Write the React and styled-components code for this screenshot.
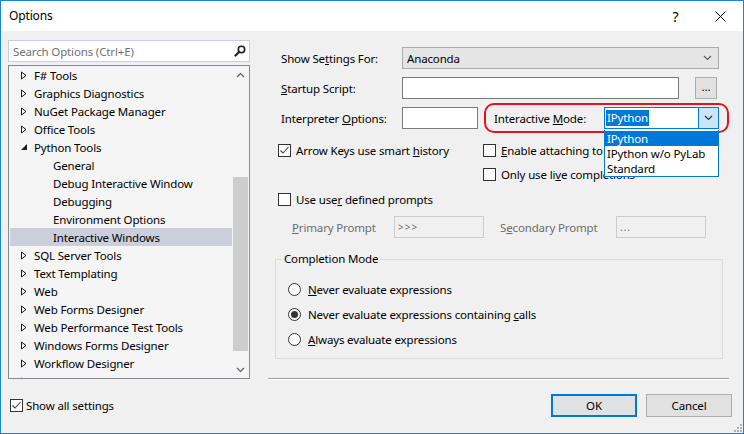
import React from 'react';
import styled, { createGlobalStyle } from 'styled-components';

const FONT = `"Segoe UI", "Noto Sans", "Open Sans", sans-serif`;

const GlobalStyle = createGlobalStyle`
  html, body {
    margin: 0;
    padding: 0;
    background: #fff;
  }
  body {
    font-family: ${FONT};
    font-size: 11.5px;
    letter-spacing: -0.15px;
    color: #000;
  }
  * {
    box-sizing: border-box;
  }
`;

const Window = styled.div`
  background: #f0f0f0;
  border: 1px solid #1883d7;
  display: flex;
  flex-direction: column;
  height: 434px;
  overflow: hidden;
  position: relative;
  width: 744px;
`;

const TitleBar = styled.div`
  align-items: center;
  background: #fff;
  display: flex;
  flex-shrink: 0;
  font-size: 12px;
  height: 30px;
  padding-left: 8px;
`;

const TitleText = styled.div`
  flex: 1;
  line-height: 30px;
`;

const CaptionButton = styled.div`
  align-items: center;
  display: flex;
  font-size: 14px;
  height: 30px;
  justify-content: center;
  width: 45px;
`;

const Body = styled.div`
  display: flex;
  flex: 1;
`;

const LeftPane = styled.div`
  display: flex;
  flex-direction: column;
  flex-shrink: 0;
  padding: 9px 0 0 7px;
  width: 249px;
`;

const SearchBox = styled.div`
  align-items: center;
  background: #fff;
  border: 1px solid #cccedb;
  display: flex;
  height: 22px;
  padding: 0 3px 0 4px;
  width: 242px;
`;

const SearchText = styled.span`
  color: #717171;
  flex: 1;
`;

const Tree = styled.div`
  background: #f5f5f5;
  border: 1px solid #828790;
  display: flex;
  height: 314px;
  margin-top: 3px;
  width: 242px;
`;

const TreeList = styled.div`
  flex: 1;
  overflow: hidden;
  padding: 0 0 0 1px;
`;

const TreeRow = styled.div`
  align-items: center;
  background: ${(p) => (p.$selected ? '#cccedb' : 'transparent')};
  display: flex;
  height: 18px;
  padding-left: ${(p) => (p.$level ? 29 : 10)}px;
  white-space: nowrap;
`;

const Toggle = styled.span`
  align-items: center;
  display: flex;
  flex-shrink: 0;
  height: 18px;
  width: 14px;
`;

const ScrollBar = styled.div`
  display: flex;
  flex-direction: column;
  flex-shrink: 0;
  width: 17px;
`;

const ScrollArrow = styled.div`
  align-items: center;
  display: flex;
  height: 17px;
  justify-content: center;
`;

const ScrollTrack = styled.div`
  flex: 1;
  padding-top: ${(p) => p.$offset}px;
`;

const ScrollThumb = styled.div`
  background: #cdcdcd;
  height: ${(p) => p.$size}px;
  margin-left: 1px;
  width: 15px;
`;

const ShowAll = styled.label`
  align-items: center;
  display: flex;
  gap: 3px;
  height: 18px;
  margin-top: 17px;
  padding-left: 2px;
`;

const RightPane = styled.div`
  display: flex;
  flex: 1;
  flex-direction: column;
  padding: 16px 15px 0 18px;
`;

const Form = styled.div`
  display: flex;
  flex-direction: column;
  padding-left: 13px;
`;

const FieldRow = styled.div`
  align-items: center;
  display: flex;
  height: 22px;
  margin-top: ${(p) => p.$gap || 0}px;
`;

const FieldLabel = styled.span`
  color: ${(p) => (p.$disabled ? '#6d6d6d' : '#000')};
  flex-shrink: 0;
  margin-left: ${(p) => p.$indent || 0}px;
  width: ${(p) => p.$width}px;
`;

const ComboBox = styled.div`
  align-items: center;
  background: #e5e5e5;
  border: 1px solid #acacac;
  display: flex;
  height: 22px;
  padding: 0 6px 0 4px;
  width: ${(p) => p.$width}px;
`;

const ComboText = styled.span`
  flex: 1;
`;

const TextBox = styled.div`
  align-items: center;
  background: ${(p) => (p.$disabled ? '#f0f0f0' : '#fff')};
  border: 1px solid ${(p) => (p.$disabled ? '#cccccc' : '#7a7a7a')};
  color: #6d6d6d;
  display: flex;
  font-size: 10px;
  height: 22px;
  letter-spacing: 1px;
  padding-left: 3px;
  width: ${(p) => p.$width}px;
`;

const SmallButton = styled.div`
  align-items: center;
  background: #e1e1e1;
  border: 1px solid #adadad;
  display: flex;
  height: 22px;
  justify-content: center;
  margin-left: 16px;
  padding-bottom: 4px;
  width: 22px;
`;

const ModeGroup = styled.div`
  align-items: center;
  border: 2px solid #e81123;
  border-radius: 10px;
  display: flex;
  height: 30px;
  margin: -4px 0 -4px 6px;
  padding: 0 8px;
`;

const EditCombo = styled.div`
  align-items: center;
  background: #fff;
  border: 1px solid #0078d7;
  display: flex;
  height: 22px;
  position: relative;
  width: 115px;
`;

const SelectedText = styled.span`
  background: #0078d7;
  color: #fff;
  line-height: 16px;
  margin-left: 1px;
  padding: 0 1px;
`;

const DropButton = styled.div`
  align-items: center;
  align-self: stretch;
  background: #cce4f7;
  border-left: 1px solid #0078d7;
  display: flex;
  justify-content: center;
  margin-left: auto;
  width: 20px;
`;

const DropList = styled.div`
  background: #fff;
  border: 1px solid #0078d7;
  border-top: none;
  left: -1px;
  padding-top: 1px;
  position: absolute;
  top: calc(100% + 2px);
  width: 115px;
  z-index: 5;
`;

const DropItem = styled.div`
  background: ${(p) => (p.$active ? '#0078d7' : 'transparent')};
  color: ${(p) => (p.$active ? '#fff' : '#000')};
  height: 15px;
  line-height: 15px;
  padding-left: 2px;
  white-space: nowrap;
`;

const CheckGrid = styled.div`
  display: grid;
  grid-template-columns: 205px 1fr;
  margin-left: -3px;
  margin-top: ${(p) => p.$gap}px;
`;

const CheckItem = styled.label`
  align-items: center;
  display: flex;
  gap: 5px;
  grid-column: ${(p) => p.$col || 'auto'};
  height: 18px;
  white-space: nowrap;
`;

const Box = styled.span`
  align-items: center;
  background: #fff;
  border: 1px solid #333;
  display: inline-flex;
  flex-shrink: 0;
  height: 13px;
  justify-content: center;
  width: 13px;
`;

const GroupBox = styled.fieldset`
  border: 1px solid #dcdcdc;
  margin: 13px 0 0 -6px;
  padding: 10px 12px 6px;
  width: 448px;
`;

const GroupTitle = styled.legend`
  line-height: 16px;
  margin-left: -6px;
  padding: 0 2px;
`;

const RadioRow = styled.label`
  align-items: center;
  display: flex;
  gap: 7px;
  height: 25px;
`;

const RadioCircle = styled.span`
  align-items: center;
  background: #fff;
  border: 1px solid #333;
  border-radius: 50%;
  display: inline-flex;
  height: 13px;
  justify-content: center;
  width: 13px;

  &::after {
    background: #333;
    border-radius: 50%;
    content: '';
    display: ${(p) => (p.$checked ? 'block' : 'none')};
    height: 7px;
    width: 7px;
  }
`;

const Separator = styled.div`
  background: #a0a0a0;
  box-shadow: 0 1px 0 #fff;
  height: 1px;
  margin-top: 19px;
`;

const ButtonRow = styled.div`
  display: flex;
  gap: 9px;
  justify-content: flex-end;
  margin-right: -3px;
  margin-top: 15px;
`;

const DialogButton = styled.div`
  align-items: center;
  background: #e1e1e1;
  border: ${(p) => (p.$default ? '2px solid #0078d7' : '1px solid #adadad')};
  display: flex;
  height: 23px;
  justify-content: center;
  width: 86px;
`;

const Grip = styled.svg`
  bottom: 1px;
  position: absolute;
  right: 1px;
`;

const U = styled.span`
  text-decoration: underline;
  text-underline-offset: 1px;
`;

const TREE = [
  { label: 'F# Tools' },
  { label: 'Graphics Diagnostics' },
  { label: 'NuGet Package Manager' },
  { label: 'Office Tools' },
  { label: 'Python Tools', open: true },
  { label: 'General', level: 1 },
  { label: 'Debug Interactive Window', level: 1 },
  { label: 'Debugging', level: 1 },
  { label: 'Environment Options', level: 1 },
  { label: 'Interactive Windows', level: 1, selected: true },
  { label: 'SQL Server Tools' },
  { label: 'Text Templating' },
  { label: 'Web' },
  { label: 'Web Forms Designer' },
  { label: 'Web Performance Test Tools' },
  { label: 'Windows Forms Designer' },
  { label: 'Workflow Designer' },
  { label: 'WPF Designer' },
];

const Chevron = ({ up, color = '#606060' }) => (
  <svg width="9" height="6" viewBox="0 0 9 6">
    <path
      d={up ? 'M1 5 L4.5 1.5 L8 5' : 'M1 1 L4.5 4.5 L8 1'}
      fill="none"
      stroke={color}
      strokeWidth="1.2"
    />
  </svg>
);

const Check = () => (
  <svg width="11" height="11" viewBox="0 0 11 11">
    <path d="M1.5 5.5 L4 8 L9.5 2" fill="none" stroke="#444" strokeWidth="1.1" />
  </svg>
);

const Checkbox = ({ checked }) => <Box>{checked && <Check />}</Box>;

const TreeToggle = ({ open }) => (
  <Toggle>
    {open === undefined ? null : open ? (
      <svg width="8" height="8" viewBox="0 0 8 8">
        <path d="M7 1 L7 7 L1 7 Z" fill="#1e1e1e" />
      </svg>
    ) : (
      <svg width="8" height="9" viewBox="0 0 8 9">
        <path d="M1.5 1 L6 4.5 L1.5 8 Z" fill="none" stroke="#1e1e1e" strokeWidth="1" />
      </svg>
    )}
  </Toggle>
);

const App = () => (
  <>
    <GlobalStyle />
    <Window>
      <TitleBar>
        <TitleText>Options</TitleText>
        <CaptionButton>?</CaptionButton>
        <CaptionButton>
          <svg width="11" height="11" viewBox="0 0 11 11">
            <path d="M0.5 0.5 L10.5 10.5 M10.5 0.5 L0.5 10.5" stroke="#000" strokeWidth="1" />
          </svg>
        </CaptionButton>
      </TitleBar>
      <Body>
        <LeftPane>
          <SearchBox>
            <SearchText>Search Options (Ctrl+E)</SearchText>
            <svg width="12" height="12" viewBox="0 0 12 12">
              <circle cx="7.5" cy="4.5" r="3.2" fill="none" stroke="#1e1e1e" strokeWidth="1.6" />
              <path d="M5 7 L1.5 10.5" stroke="#1e1e1e" strokeWidth="2.2" strokeLinecap="round" />
            </svg>
          </SearchBox>
          <Tree>
            <TreeList>
              {TREE.map((item) => (
                <TreeRow key={item.label} $level={item.level} $selected={item.selected}>
                  <TreeToggle open={item.level ? undefined : !!item.open} />
                  {item.label}
                </TreeRow>
              ))}
            </TreeList>
            <ScrollBar>
              <ScrollArrow>
                <Chevron up />
              </ScrollArrow>
              <ScrollTrack $offset={94}>
                <ScrollThumb $size={174} />
              </ScrollTrack>
              <ScrollArrow>
                <Chevron />
              </ScrollArrow>
            </ScrollBar>
          </Tree>
          <ShowAll>
            <Checkbox checked />
            Show all settings
          </ShowAll>
        </LeftPane>

        <RightPane>
          <Form>
            <FieldRow>
              <FieldLabel $width={121}>
                Show Se<U>t</U>tings For:
              </FieldLabel>
              <ComboBox $width={317}>
                <ComboText>Anaconda</ComboText>
                <Chevron />
              </ComboBox>
            </FieldRow>

            <FieldRow $gap={8}>
              <FieldLabel $width={121}>
                <U>S</U>tartup Script:
              </FieldLabel>
              <TextBox $width={277} />
              <SmallButton>...</SmallButton>
            </FieldRow>

            <FieldRow $gap={8}>
              <FieldLabel $width={121}>
                Interpreter <U>O</U>ptions:
              </FieldLabel>
              <TextBox $width={76} />
              <ModeGroup>
                <FieldLabel $width={110}>
                  Interactive <U>M</U>ode:
                </FieldLabel>
                <EditCombo>
                  <SelectedText>IPython</SelectedText>
                  <DropButton>
                    <Chevron color="#333" />
                  </DropButton>
                  <DropList>
                    <DropItem $active>IPython</DropItem>
                    <DropItem>IPython w/o PyLab</DropItem>
                    <DropItem>Standard</DropItem>
                  </DropList>
                </EditCombo>
              </ModeGroup>
            </FieldRow>

            <CheckGrid $gap={12}>
              <CheckItem>
                <Checkbox checked />
                <span>
                  Arrow Keys use smart <U>h</U>istory
                </span>
              </CheckItem>
              <CheckItem>
                <Checkbox />
                <span>
                  <U>E</U>nable attaching to REPL process
                </span>
              </CheckItem>
            </CheckGrid>
            <CheckGrid $gap={6}>
              <CheckItem $col={2}>
                <Checkbox />
                <span>
                  Only use li<U>v</U>e completions
                </span>
              </CheckItem>
            </CheckGrid>
            <CheckGrid $gap={7}>
              <CheckItem>
                <Checkbox />
                <span>
                  Use use<U>r</U> defined prompts
                </span>
              </CheckItem>
            </CheckGrid>

            <FieldRow $gap={8}>
              <FieldLabel $width={102} $indent={11} $disabled>
                <U>P</U>rimary Prompt
              </FieldLabel>
              <TextBox $width={90} $disabled>
                &gt;&gt;&gt;
              </TextBox>
              <FieldLabel $width={116} $indent={16} $disabled>
                S<U>e</U>condary Prompt
              </FieldLabel>
              <TextBox $width={90} $disabled>
                ...
              </TextBox>
            </FieldRow>

            <GroupBox>
              <GroupTitle>Completion Mode</GroupTitle>
              <RadioRow>
                <RadioCircle />
                <span>
                  <U>N</U>ever evaluate expressions
                </span>
              </RadioRow>
              <RadioRow>
                <RadioCircle $checked />
                <span>
                  Never evaluate expressions containing <U>c</U>alls
                </span>
              </RadioRow>
              <RadioRow>
                <RadioCircle />
                <span>
                  <U>A</U>lways evaluate expressions
                </span>
              </RadioRow>
            </GroupBox>
          </Form>

          <Separator />

          <ButtonRow>
            <DialogButton $default>OK</DialogButton>
            <DialogButton>Cancel</DialogButton>
          </ButtonRow>
        </RightPane>
      </Body>
      <Grip width="10" height="10" viewBox="0 0 10 10">
        <g fill="#b0b0b0">
          <rect x="8" y="2" width="2" height="2" />
          <rect x="5" y="5" width="2" height="2" />
          <rect x="8" y="5" width="2" height="2" />
          <rect x="2" y="8" width="2" height="2" />
          <rect x="5" y="8" width="2" height="2" />
          <rect x="8" y="8" width="2" height="2" />
        </g>
      </Grip>
    </Window>
  </>
);

export default App;
